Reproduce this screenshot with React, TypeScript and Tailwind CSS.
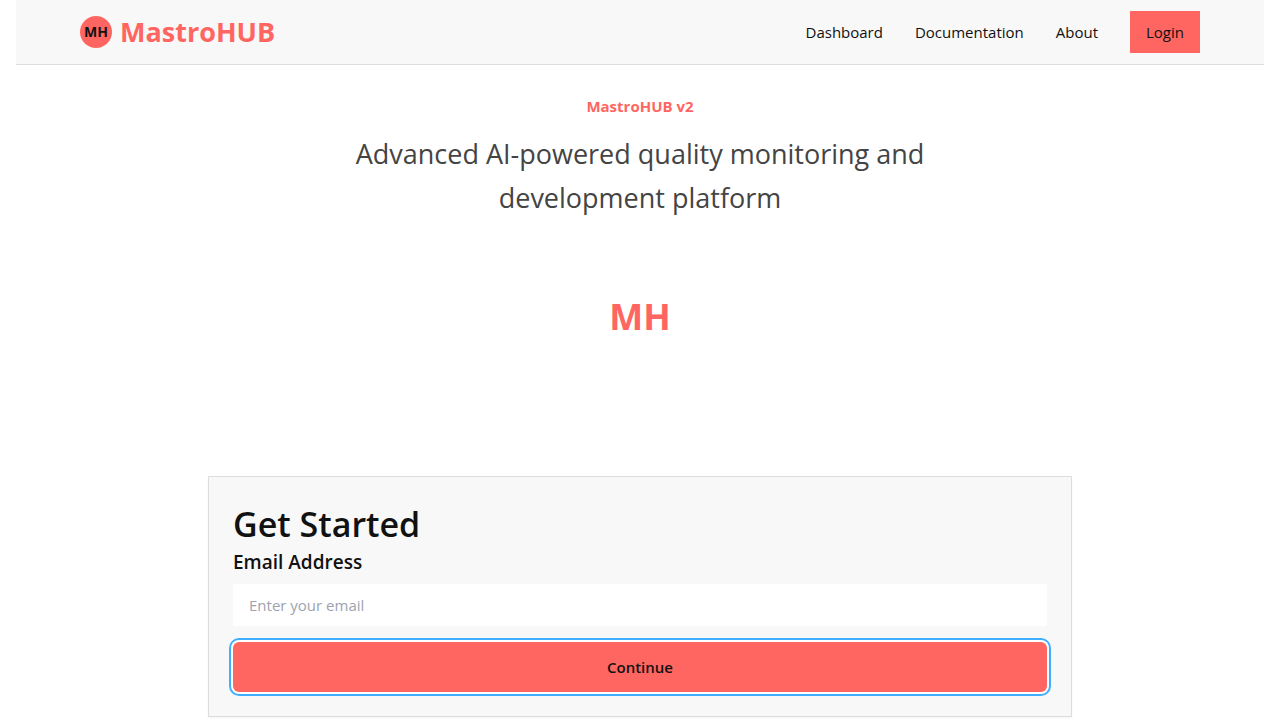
export default function App() {
  return (
    <div className="min-h-screen bg-white px-4 font-['Open_Sans','Noto_Sans',sans-serif] text-[#111111]">
      <header className="flex h-[65px] items-center justify-between border-b border-[#dddddd] bg-[#f8f8f8] px-16">
        <a href="#" className="flex items-center gap-2">
          <span className="flex size-8 items-center justify-center rounded-full bg-[#ff6661] text-sm font-bold">MH</span>
          <span className="text-[27px] leading-10 font-bold text-[#ff6661]">MastroHUB</span>
        </a>
        <nav className="flex items-center gap-8 text-[15px]">
          <a href="#">Dashboard</a>
          <a href="#">Documentation</a>
          <a href="#">About</a>
          <button className="h-[42px] bg-[#ff6661] px-4">Login</button>
        </nav>
      </header>
      <main className="mx-auto max-w-[864px] pt-[27px]">
        <section className="flex flex-col items-center text-center">
          <h1 className="text-[15px] leading-7 font-bold text-[#ff6661]">MastroHUB v2</h1>
          <p className="mt-3 max-w-2xl text-[27px] leading-11 text-[#444444]">
            Advanced AI-powered quality monitoring and development platform
          </p>
          <div className="mt-8 flex h-[130px] items-center justify-center text-4xl font-bold text-[#ff6661]">MH</div>
        </section>
        <form className="mt-[94px] border border-[#dddddd] bg-[#f8f8f8] p-6 shadow-xs" onSubmit={(e) => e.preventDefault()}>
          <h2 className="text-[34px] leading-[47px] font-semibold">Get Started</h2>
          <label htmlFor="email" className="block text-[19px] leading-7 font-semibold">Email Address</label>
          <input id="email" type="email" placeholder="Enter your email" className="mt-2 block h-[42px] w-full bg-white px-4 text-[15px] placeholder:text-[#9ca3af]" />
          <button className="mt-4 block h-[50px] w-full rounded-md bg-[#ff6661] text-[15px] font-semibold ring-2 ring-[#40aeff] ring-offset-2">Continue</button>
        </form>
      </main>
    </div>
  );
}
